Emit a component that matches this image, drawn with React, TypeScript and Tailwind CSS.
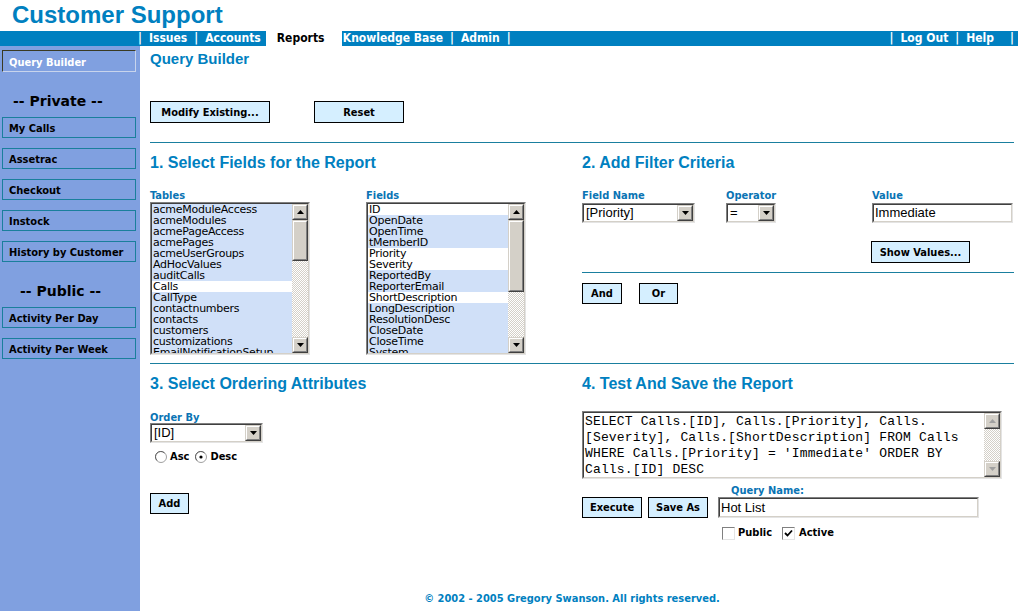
import React from "react";

const ui = "font-['DejaVu_Sans_Condensed','Liberation_Sans',sans-serif]";
const arial = "font-['Liberation_Sans',Arial,sans-serif]";
const verdana = "font-['DejaVu_Sans','Liberation_Sans',sans-serif]";

const tables: [string, boolean][] = [
  ["acmeModuleAccess", true],
  ["acmeModules", true],
  ["acmePageAccess", true],
  ["acmePages", true],
  ["acmeUserGroups", true],
  ["AdHocValues", true],
  ["auditCalls", true],
  ["Calls", false],
  ["CallType", true],
  ["contactnumbers", true],
  ["contacts", true],
  ["customers", true],
  ["customizations", true],
  ["EmailNotificationSetup", true],
];

const fields: [string, boolean][] = [
  ["ID", false],
  ["OpenDate", true],
  ["OpenTime", true],
  ["tMemberID", true],
  ["Priority", false],
  ["Severity", false],
  ["ReportedBy", true],
  ["ReporterEmail", true],
  ["ShortDescription", false],
  ["LongDescription", true],
  ["ResolutionDesc", true],
  ["CloseDate", true],
  ["CloseTime", true],
  ["System", true],
];

function Arrow({ down, disabled }: { down?: boolean; disabled?: boolean }) {
  return (
    <div className="w-[16px] h-[16px] shrink-0 border border-t-[#d4d0c8] border-l-[#d4d0c8] border-r-[#404040] border-b-[#404040] bg-[#d4d0c8]">
      <div className="w-full h-full border border-t-white border-l-white border-r-[#808080] border-b-[#808080] flex items-center justify-center">
        <svg width="7" height="4" viewBox="0 0 7 4">
          {down ? (
            <polygon points="0,0 7,0 3.5,4" fill={disabled ? "#a0a0a0" : "#000"} />
          ) : (
            <polygon points="0,4 7,4 3.5,0" fill={disabled ? "#a0a0a0" : "#000"} />
          )}
        </svg>
      </div>
    </div>
  );
}

function Scrollbar({ thumb, disabled }: { thumb?: string; disabled?: boolean }) {
  return (
    <div className="w-[16px] h-full shrink-0 flex flex-col">
      <Arrow disabled={disabled} />
      <div className="flex-1 bg-[repeating-conic-gradient(#d4d0c8_0%_25%,#ffffff_0%_50%)] bg-[length:2px_2px]">
        {thumb && (
          <div className={`${thumb} w-[16px] border border-t-[#d4d0c8] border-l-[#d4d0c8] border-r-[#404040] border-b-[#404040] bg-[#d4d0c8]`}>
            <div className="w-full h-full border border-t-white border-l-white border-r-[#808080] border-b-[#808080]" />
          </div>
        )}
      </div>
      <Arrow down disabled={disabled} />
    </div>
  );
}

function Inset({ className = "", children }: { className?: string; children: React.ReactNode }) {
  return (
    <div className={`border border-[#808080] border-r-[#e4e4e4] border-b-[#e4e4e4] ${className}`}>
      <div className="w-full h-full border border-[#404040] border-r-[#d4d0c8] border-b-[#d4d0c8] bg-white flex overflow-hidden">
        {children}
      </div>
    </div>
  );
}

function ListBox({ items, thumb }: { items: [string, boolean][]; thumb: string }) {
  return (
    <Inset className="w-[160px] h-[153px]">
      <div className={`flex-1 ${verdana} text-[11px] leading-[11px] tracking-[-0.25px] text-black`}>
        {items.map(([t, sel]) => (
          <div key={t} className={`h-[11px] pl-[1px] whitespace-nowrap ${sel ? "bg-[#d0e0f8]" : "bg-white"}`}>
            {t}
          </div>
        ))}
      </div>
      <Scrollbar thumb={thumb} />
    </Inset>
  );
}

function Select({ value, className }: { value: string; className: string }) {
  return (
    <Inset className={`${className} h-[20px]`}>
      <div className={`flex-1 pl-[2px] ${arial} text-[13px] leading-[16px] text-black`}>{value}</div>
      <Arrow down />
    </Inset>
  );
}

function TextBox({ value, className }: { value: string; className: string }) {
  return (
    <Inset className={className}>
      <div className={`flex-1 pl-[1px] flex items-center ${arial} text-[13px] text-black`}>{value}</div>
    </Inset>
  );
}

function Btn({ className, children }: { className: string; children: React.ReactNode }) {
  return (
    <div className={`${className} shrink-0 border border-black bg-[#d5efff] flex items-center justify-center pt-[2px] ${ui} text-[11px] font-bold text-black`}>
      {children}
    </div>
  );
}

function Label({ children, className = "" }: { children: React.ReactNode; className?: string }) {
  return <div className={`${ui} text-[11px] font-bold leading-[13px] text-[#0a74b4] ${className}`}>{children}</div>;
}

function Heading({ children }: { children: React.ReactNode }) {
  return <div className={`${arial} text-[16px] font-bold leading-[20px] text-[#0080c0] whitespace-nowrap`}>{children}</div>;
}

function Radio({ checked }: { checked?: boolean }) {
  return (
    <svg width="12" height="12" viewBox="0 0 12 12" className="shrink-0">
      <circle cx="6" cy="6" r="5.5" fill="#fff" stroke="#a0a0a0" />
      <path d="M2 9.5 A5 5 0 0 1 9.5 2" fill="none" stroke="#606060" />
      {checked && <circle cx="6" cy="6" r="1.6" fill="#000" />}
    </svg>
  );
}

function Check({ checked }: { checked?: boolean }) {
  return (
    <div className="w-[13px] h-[13px] shrink-0 border border-[#808080] border-r-[#e4e4e4] border-b-[#e4e4e4] bg-white flex items-center justify-center">
      {checked && (
        <svg width="9" height="9" viewBox="0 0 9 9">
          <path d="M1 4 L3.5 6.5 L8 1.5" fill="none" stroke="#000" strokeWidth="1.8" />
        </svg>
      )}
    </div>
  );
}

function SideBtn({ children }: { children: React.ReactNode }) {
  return (
    <div className={`w-[134px] h-[21px] border border-[#1a7f9c] pl-[6px] pt-[4px] ${ui} text-[11px] leading-[13px] font-bold text-black`}>
      {children}
    </div>
  );
}

function Sidebar() {
  return (
    <aside className="w-[140px] shrink-0 bg-[#80a0e0] pt-[4px] pl-[2px] flex flex-col">
      <div className={`w-[134px] h-[22px] border border-t-[#3a3a22] border-l-[#3a3a22] border-r-[#c8d4ec] border-b-[#c8d4ec] pl-[6px] pt-[5px] ${ui} text-[11px] leading-[13px] font-bold text-white`}>
        Query Builder
      </div>
      <div className={`mt-[21px] h-[16px] pl-[11px] ${verdana} text-[14px] font-bold leading-[16px] text-black`}>-- Private --</div>
      <div className="mt-[8px] flex flex-col gap-[10px]">
        <SideBtn>My Calls</SideBtn>
        <SideBtn>Assetrac</SideBtn>
        <SideBtn>Checkout</SideBtn>
        <SideBtn>Instock</SideBtn>
        <SideBtn>History by Customer</SideBtn>
      </div>
      <div className={`mt-[21px] h-[16px] pl-[18px] ${verdana} text-[14px] font-bold leading-[16px] text-black`}>-- Public --</div>
      <div className="mt-[8px] flex flex-col gap-[10px]">
        <SideBtn>Activity Per Day</SideBtn>
        <SideBtn>Activity Per Week</SideBtn>
      </div>
    </aside>
  );
}

function NavBar() {
  return (
    <div className={`h-[15px] bg-[#0080c0] flex items-stretch ${ui} text-[12px] font-bold leading-[15px] text-white`}>
      <div className="pl-[138px] flex gap-[7px]">
        <span>|</span>
        <span>Issues</span>
        <span>|</span>
        <span>Accounts</span>
        <span className="bg-white text-black w-[76px] pl-[11px] -ml-[2px] -mr-[6px]">Reports</span>
        <span>Knowledge Base</span>
        <span>|</span>
        <span>Admin</span>
        <span>|</span>
      </div>
      <div className="ml-auto pr-[4px] flex gap-[7px]">
        <span>|</span>
        <span>Log Out</span>
        <span>|</span>
        <span className="mr-[9px]">Help</span>
        <span>|</span>
      </div>
    </div>
  );
}

const sql = `SELECT Calls.[ID], Calls.[Priority], Calls.
[Severity], Calls.[ShortDescription] FROM Calls
WHERE Calls.[Priority] = 'Immediate' ORDER BY
Calls.[ID] DESC`;

export default function App() {
  return (
    <div className="w-full h-[611px] overflow-hidden bg-white flex flex-col">
      <div className={`h-[31px] pl-[12px] ${arial} text-[24px] font-bold leading-[30px] text-[#0080c0]`}>Customer Support</div>
      <NavBar />
      <div className="flex-1 flex min-h-0">
        <Sidebar />
        <main className="flex-1 pl-[10px] pr-[4px] flex flex-col">
          <div className={`mt-[3px] h-[20px] ${arial} text-[15px] font-bold leading-[20px] text-[#0080c0]`}>Query Builder</div>
          <div className="mt-[32px] flex gap-[44px]">
            <Btn className="w-[120px] h-[22px]">Modify Existing...</Btn>
            <Btn className="w-[90px] h-[22px]">Reset</Btn>
          </div>
          <div className="mt-[19px] h-px bg-[#1a7f9f]" />

          <div className="flex">
            <section className="w-[432px] shrink-0 pt-[10px]">
              <Heading>1. Select Fields for the Report</Heading>
              <div className="mt-[16px] flex">
                <div className="w-[216px]">
                  <Label>Tables</Label>
                  <ListBox items={tables} thumb="h-[41px]" />
                </div>
                <div>
                  <Label>Fields</Label>
                  <ListBox items={fields} thumb="h-[72px]" />
                </div>
              </div>
            </section>
            <section className="flex-1 pt-[10px]">
              <Heading>2. Add Filter Criteria</Heading>
              <div className="mt-[16px] flex">
                <div className="w-[144px]">
                  <Label className="h-[14px]">Field Name</Label>
                  <Select value="[Priority]" className="w-[113px]" />
                </div>
                <div className="w-[146px]">
                  <Label className="h-[14px]">Operator</Label>
                  <Select value="=" className="w-[50px]" />
                </div>
                <div className="flex-1">
                  <Label className="h-[14px]">Value</Label>
                  <TextBox value="Immediate" className="w-[141px] h-[20px]" />
                  <Btn className="mt-[18px] -ml-[1px] w-[99px] h-[22px]">Show Values...</Btn>
                </div>
              </div>
              <div className="mt-[9px] h-px bg-[#1a7f9f]" />
              <div className="mt-[10px] flex gap-[17px]">
                <Btn className="w-[40px] h-[21px]">And</Btn>
                <Btn className="w-[39px] h-[21px]">Or</Btn>
              </div>
            </section>
          </div>

          <div className="mt-[8px] h-px bg-[#1a7f9f]" />

          <div className="flex">
            <section className="w-[432px] shrink-0 pt-[10px]">
              <Heading>3. Select Ordering Attributes</Heading>
              <Label className="mt-[17px] h-[12px]">Order By</Label>
              <Select value="[ID]" className="w-[113px]" />
              <div className={`mt-[7px] pl-[5px] h-[14px] flex items-center gap-[3px] ${ui} text-[11px] font-bold text-black`}>
                <Radio />
                <span className="mr-[3px]">Asc</span>
                <Radio checked />
                <span>Desc</span>
              </div>
              <Btn className="mt-[29px] w-[39px] h-[21px]">Add</Btn>
            </section>
            <section className="flex-1 pt-[10px]">
              <Heading>4. Test And Save the Report</Heading>
              <Inset className="mt-[17px] w-[420px] h-[68px]">
                <div className="flex-1 pl-[1px] pt-[1px] font-['Liberation_Mono','Courier_New',monospace] text-[13px] leading-[16px] tracking-[0.15px] whitespace-pre text-black">
                  {sql}
                </div>
                <Scrollbar disabled />
              </Inset>
              <div className="mt-[5px] flex items-end gap-[6px]">
                <Btn className="w-[60px] h-[21px]">Execute</Btn>
                <Btn className="w-[60px] h-[21px]">Save As</Btn>
                <div className="ml-[4px]">
                  <Label className="pl-[13px]">Query Name:</Label>
                  <TextBox value="Hot List" className="w-[261px] h-[21px]" />
                </div>
              </div>
              <div className={`mt-[7px] ml-[140px] flex items-center ${ui} text-[11px] font-bold text-black`}>
                <Check />
                <span className="ml-[3px] mr-[10px]">Public</span>
                <Check checked />
                <span className="ml-[4px]">Active</span>
              </div>
            </section>
          </div>

          <div className={`mt-auto pb-[6px] pr-[20px] text-center ${ui} text-[11px] font-bold leading-[13px] text-[#0080c0]`}>
            © 2002 - 2005 Gregory Swanson. All rights reserved.
          </div>
        </main>
      </div>
    </div>
  );
}
